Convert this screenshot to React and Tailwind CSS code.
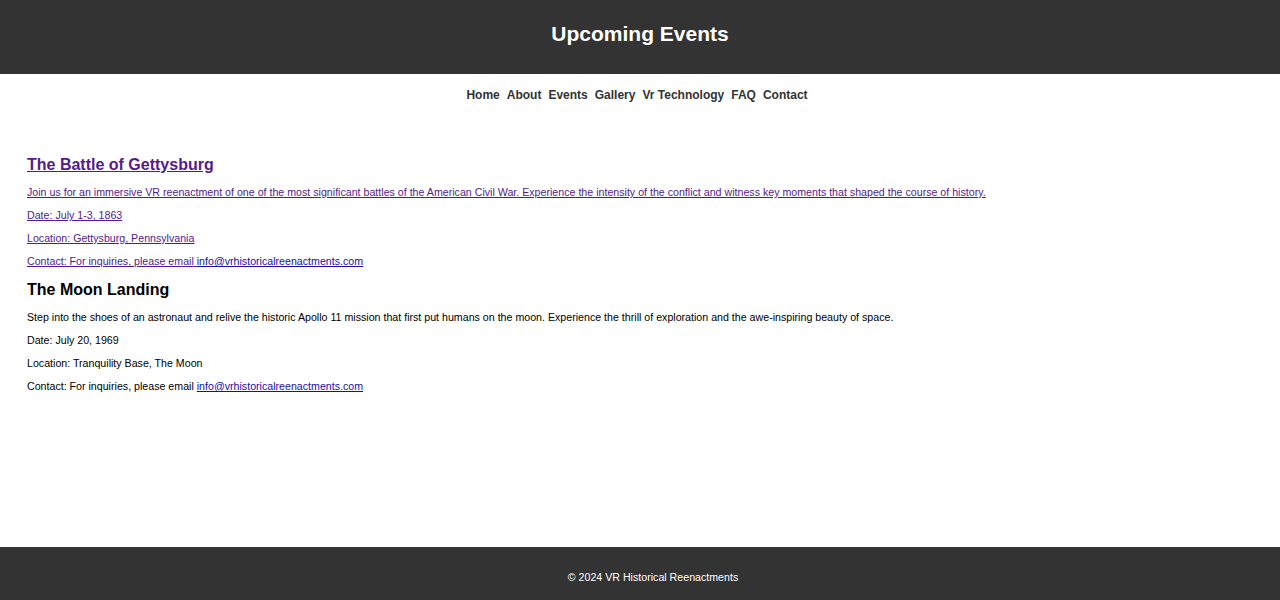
const NAV = ["Home", "About", "Events", "Gallery", "Vr Technology", "FAQ", "Contact"];

const EVENTS = [
  {
    title: "The Battle of Gettysburg",
    text: "Join us for an immersive VR reenactment of one of the most significant battles of the American Civil War. Experience the intensity of the conflict and witness key moments that shaped the course of history.",
    date: "July 1-3, 1863",
    location: "Gettysburg, Pennsylvania",
    visited: true,
  },
  {
    title: "The Moon Landing",
    text: "Step into the shoes of an astronaut and relive the historic Apollo 11 mission that first put humans on the moon. Experience the thrill of exploration and the awe-inspiring beauty of space.",
    date: "July 20, 1969",
    location: "Tranquility Base, The Moon",
    visited: false,
  },
];

function EventBody({ ev }) {
  return (
    <>
      <h2 className="text-[16px] leading-[19px] font-bold mt-[12px] mb-[12px]">{ev.title}</h2>
      <p className="text-[10.65px] leading-[13px]">{ev.text}</p>
      <p className="text-[10.65px] leading-[13px] mt-[10px]">Date: {ev.date}</p>
      <p className="text-[10.65px] leading-[13px] mt-[10px]">Location: {ev.location}</p>
      <p className="text-[10.65px] leading-[13px] mt-[10px]">
        Contact: For inquiries, please email{" "}
        <span className="text-[#1a0dab] underline">info@vrhistoricalreenactments.com</span>
      </p>
    </>
  );
}

export default function App() {
  return (
    <div className="h-[600px] flex flex-col bg-white" style={{ fontFamily: '"Liberation Sans", Arial, sans-serif' }}>
      {/* Header */}
      <header className="h-[74px] shrink-0 bg-[#333333] flex items-center justify-center pb-[7px]">
        <h1 className="text-white text-[21px] font-bold">Upcoming Events</h1>
      </header>

      {/* Nav */}
      <nav className="h-[40px] shrink-0 flex items-center justify-center gap-[7px] pr-[6px] pt-[1px]">
        {NAV.map((n) => (
          <a key={n} className="text-[12px] font-bold text-[#333333]">
            {n}
          </a>
        ))}
      </nav>

      {/* Events */}
      <main className="flex-1 px-[27px] pt-[29px]">
        {EVENTS.map((ev) =>
          ev.visited ? (
            <a key={ev.title} className="block text-[#551a8b] underline">
              <EventBody ev={ev} />
            </a>
          ) : (
            <div key={ev.title} className="text-black">
              <EventBody ev={ev} />
            </div>
          )
        )}
      </main>

      {/* Footer */}
      <footer className="h-[53px] shrink-0 bg-[#333333] flex items-center justify-center pt-[9px] pl-[26px]">
        <p className="text-white text-[10.65px]">© 2024 VR Historical Reenactments</p>
      </footer>
    </div>
  );
}
